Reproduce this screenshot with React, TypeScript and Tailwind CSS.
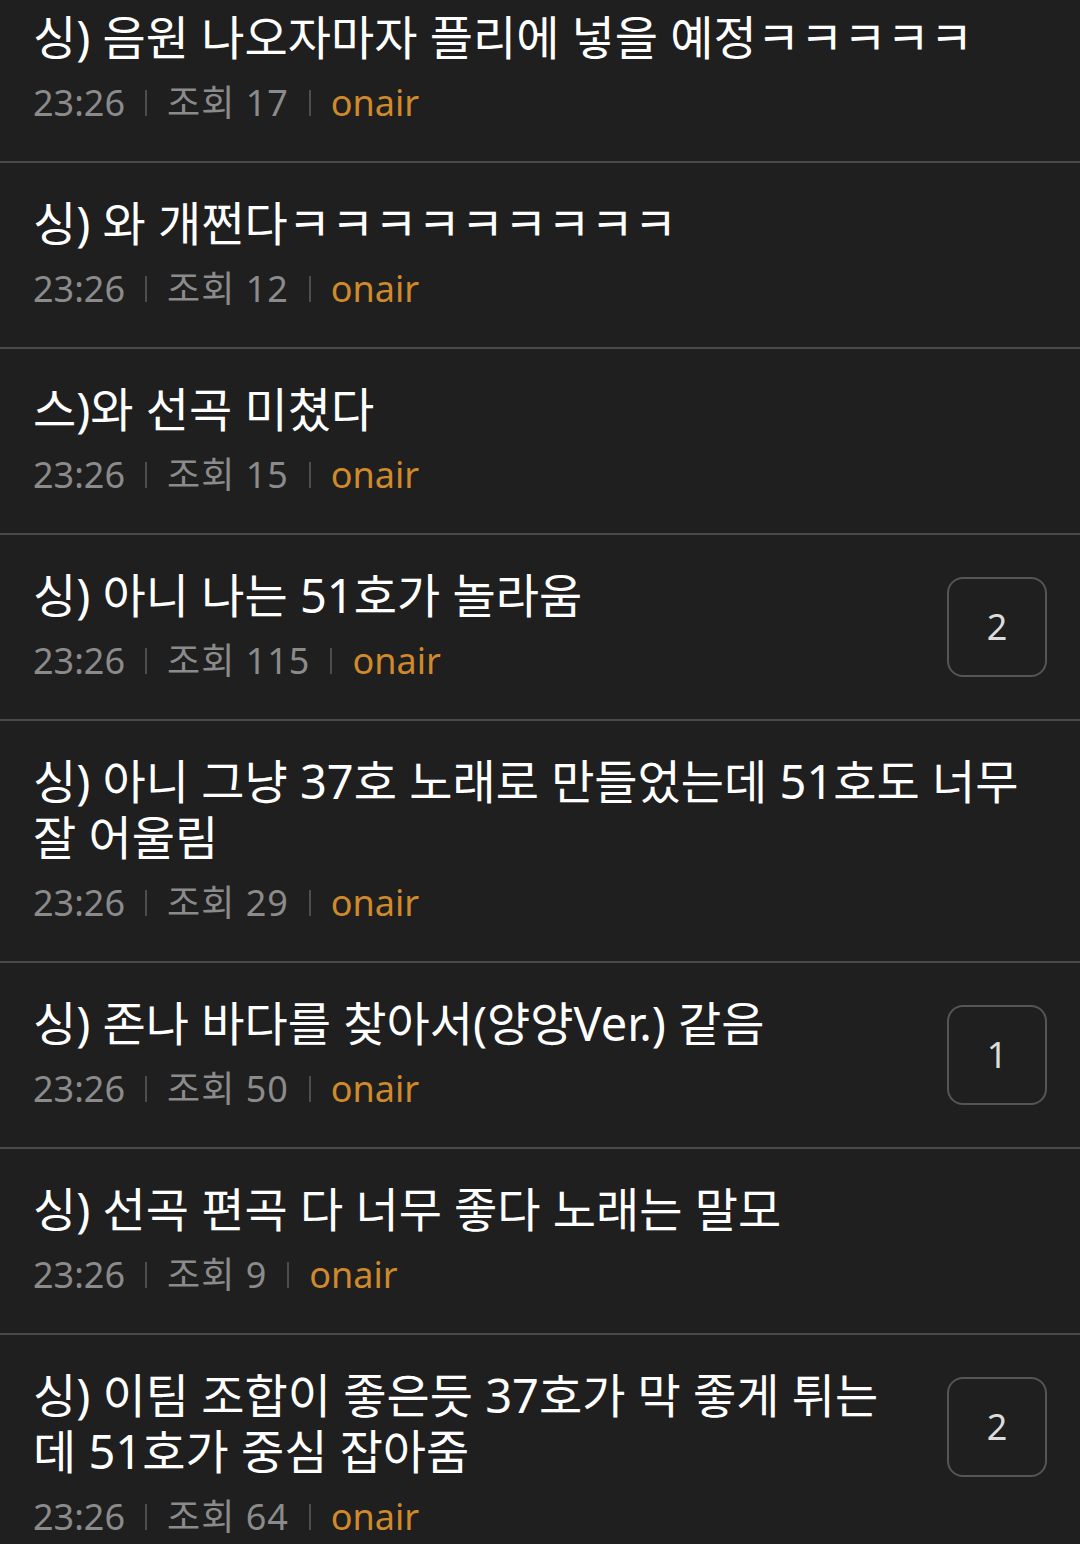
const posts = [
  { title: "싱) 음원 나오자마자 플리에 넣을 예정ㅋㅋㅋㅋㅋ", views: 17 },
  { title: "싱) 와 개쩐다ㅋㅋㅋㅋㅋㅋㅋㅋㅋ", views: 12 },
  { title: "스)와 선곡 미쳤다", views: 15 },
  { title: "싱) 아니 나는 51호가 놀라움", views: 115, comments: 2 },
  { title: "싱) 아니 그냥 37호 노래로 만들었는데 51호도 너무 잘 어울림", views: 29 },
  { title: "싱) 존나 바다를 찾아서(양양Ver.) 같음", views: 50, comments: 1 },
  { title: "싱) 선곡 편곡 다 너무 좋다 노래는 말모", views: 9 },
  { title: "싱) 이팀 조합이 좋은듯 37호가 막 좋게 튀는데 51호가 중심 잡아줌", views: 64, comments: 2 },
]

function Sep() {
  return <span className="mx-[20px] inline-block h-[26px] w-[2px] bg-[#4d4d4d]" />
}

export default function App() {
  return (
    <div className="h-[1544px] overflow-hidden bg-[#1f1f1f] font-['Noto_Sans','Noto_Sans_CJK_KR',sans-serif]">
      <ul className="-mt-[23px]">
        {posts.map((p, i) => (
          <li key={i} className="flex items-start border-b-2 border-[#494949] px-[33px] pt-[32px] pb-[36px]">
            <div className="min-w-0 flex-1">
              <p className={p.comments ? "pr-[40px] text-[47px] leading-[56px] text-white" : "text-[47px] leading-[56px] text-white"}>
                {p.title}
              </p>
              <div className="mt-[16px] flex h-[44px] items-center text-[36px] text-[#8b8b8b]">
                <span>23:26</span>
                <Sep />
                <span className="tracking-[1px]">조회 {p.views}</span>
                <Sep />
                <span className="text-[#d18a2b]">onair</span>
              </div>
            </div>
            {p.comments && (
              <div className="mt-[10px] flex h-[100px] w-[100px] shrink-0 items-center justify-center rounded-[16px] border-2 border-[#555555] text-[36px] text-[#dcdcdc]">
                {p.comments}
              </div>
            )}
          </li>
        ))}
      </ul>
    </div>
  )
}
